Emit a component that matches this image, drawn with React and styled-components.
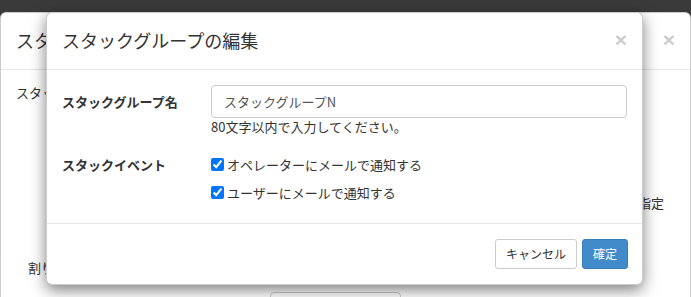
import styled, { createGlobalStyle } from "styled-components";

const GlobalStyle = createGlobalStyle`
  html, body {
    margin: 0;
    padding: 0;
    background: #3a3a3a;
    overflow: hidden;
  }
  body {
    font-family: "Noto Sans CJK JP", "Liberation Sans", sans-serif;
    font-size: 13px;
    color: #333;
  }
  * {
    box-sizing: border-box;
  }
`;

const Page = styled.div`
  position: relative;
  width: 691px;
  height: 297px;
  padding-top: 12px;
  overflow: hidden;
`;

const ModalBox = styled.div`
  background: #fff;
  border: 1px solid rgba(0, 0, 0, 0.2);
  border-radius: 6px;
`;

const BackModal = styled(ModalBox)`
  width: 691px;
  height: 320px;
  border-bottom: none;
`;

const FrontModal = styled(ModalBox)`
  position: absolute;
  left: 46px;
  top: 12px;
  width: 597px;
  box-shadow: 0 5px 15px rgba(0, 0, 0, 0.5);
`;

const Header = styled.div`
  display: flex;
  align-items: center;
  justify-content: space-between;
  padding: 15px;
  border-bottom: 1px solid #e5e5e5;
`;

const Title = styled.h4`
  margin: 0;
  font-size: 18px;
  font-weight: 400;
  line-height: 25.7px;
  color: #333;
  white-space: nowrap;
`;

const Close = styled.span`
  font-family: "Liberation Sans", sans-serif;
  font-size: 21px;
  font-weight: bold;
  line-height: 1;
  color: #000;
  opacity: 0.2;
  margin-top: -2px;
`;

const BackBody = styled.div`
  display: flex;
  flex-direction: column;
  padding: 14px 26px 0 15px;
  line-height: 18px;
`;

const BackRow = styled.div`
  white-space: nowrap;
  padding-left: ${(p) => p.$indent || 0}px;
  margin-top: ${(p) => p.$gap || 0}px;
  text-align: ${(p) => p.$align || "left"};
`;

const BackButton = styled.div`
  margin: 15px 0 0 269px;
  width: 131px;
  height: 30px;
  border: 1px solid #ccc;
  border-radius: 4px;
`;

const Body = styled.div`
  padding: 15px 15px 16px;
`;

const FormGroup = styled.div`
  display: grid;
  grid-template-columns: 149px 1fr;
  margin-bottom: ${(p) => (p.$last ? 0 : 15)}px;
`;

const Label = styled.label`
  font-weight: bold;
  line-height: 18px;
  padding-top: ${(p) => p.$top}px;
  white-space: nowrap;
`;

const TextInput = styled.input`
  display: block;
  width: 100%;
  height: 33px;
  padding: 6px 12px;
  border: 1px solid #ccc;
  border-radius: 4px;
  font: inherit;
  font-size: 13px;
  color: #555;
  outline: none;
`;

const Help = styled.div`
  line-height: 18px;
  color: #333;
`;

const CheckRow = styled.label`
  display: flex;
  align-items: center;
  height: 28px;
  white-space: nowrap;
  color: #333;
`;

const Check = styled.input`
  width: 13px;
  height: 13px;
  margin: 0 3px 0 0;
`;

const Footer = styled.div`
  display: flex;
  justify-content: flex-end;
  gap: 5px;
  padding: 15px 14px 15px 15px;
  border-top: 1px solid #e5e5e5;
`;

const Button = styled.button`
  height: 30px;
  padding: 5px 10px;
  font-family: inherit;
  font-size: 12px;
  line-height: 18px;
  border-radius: 3px;
  border: 1px solid ${(p) => (p.$primary ? "#357ebd" : "#ccc")};
  background: ${(p) => (p.$primary ? "#428bca" : "#fff")};
  color: ${(p) => (p.$primary ? "#fff" : "#333")};
`;

export default function App() {
  return (
    <Page>
      <GlobalStyle />
      <BackModal>
        <Header>
          <Title>スタックグループの作成</Title>
          <Close>×</Close>
        </Header>
        <BackBody>
          <BackRow>スタックグループを作成します。</BackRow>
          <BackRow $indent={29} $gap={22}>スタックグループ名</BackRow>
          <BackRow $align="right" $gap={52}>ユーザーを指定</BackRow>
          <BackRow $indent={12} $gap={47}>割り当て</BackRow>
        </BackBody>
        <BackButton />
      </BackModal>

      <FrontModal>
        <Header>
          <Title>スタックグループの編集</Title>
          <Close>×</Close>
        </Header>
        <Body>
          <FormGroup>
            <Label $top={8}>スタックグループ名</Label>
            <div>
              <TextInput type="text" defaultValue="スタックグループN" />
              <Help>80文字以内で入力してください。</Help>
            </div>
          </FormGroup>
          <FormGroup $last>
            <Label $top={5}>スタックイベント</Label>
            <div>
              <CheckRow>
                <Check type="checkbox" defaultChecked />
                オペレーターにメールで通知する
              </CheckRow>
              <CheckRow>
                <Check type="checkbox" defaultChecked />
                ユーザーにメールで通知する
              </CheckRow>
            </div>
          </FormGroup>
        </Body>
        <Footer>
          <Button>キャンセル</Button>
          <Button $primary>確定</Button>
        </Footer>
      </FrontModal>
    </Page>
  );
}
